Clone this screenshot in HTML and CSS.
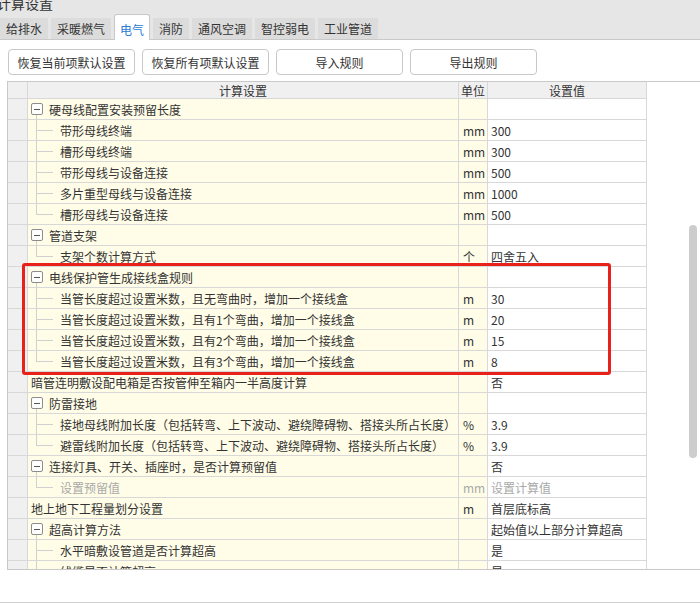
FILE: index.html
```html
<!DOCTYPE html>
<html lang="zh-CN">
<head>
<meta charset="utf-8">
<title>计算设置</title>
<link rel="stylesheet" href="styles.css">
</head>
<body>
<div class="title"><span>计算设置</span></div>
<div class="tabs">
  <div class="tab">给排水</div>
  <div class="tab">采暖燃气</div>
  <div class="tab active">电气</div>
  <div class="tab">消防</div>
  <div class="tab">通风空调</div>
  <div class="tab">智控弱电</div>
  <div class="tab">工业管道</div>
</div>
<div class="toolbar">
  <button class="btn">恢复当前项默认设置</button>
  <button class="btn">恢复所有项默认设置</button>
  <button class="btn">导入规则</button>
  <button class="btn">导出规则</button>
</div>
<div class="grid">
  <div class="row head"><div class="rh"></div><div class="name">计算设置</div><div class="unit">单位</div><div class="val">设置值</div></div>

  <div class="row group"><div class="rh"></div><div class="name"><span class="box"></span><span class="gt">硬母线配置安装预留长度</span></div><div class="unit"></div><div class="val"></div></div>
  <div class="row"><div class="rh"></div><div class="name"><span class="branch"></span>带形母线终端</div><div class="unit">mm</div><div class="val">300</div></div>
  <div class="row"><div class="rh"></div><div class="name"><span class="branch"></span>槽形母线终端</div><div class="unit">mm</div><div class="val">300</div></div>
  <div class="row"><div class="rh"></div><div class="name"><span class="branch"></span>带形母线与设备连接</div><div class="unit">mm</div><div class="val">500</div></div>
  <div class="row"><div class="rh"></div><div class="name"><span class="branch"></span>多片重型母线与设备连接</div><div class="unit">mm</div><div class="val">1000</div></div>
  <div class="row"><div class="rh"></div><div class="name"><span class="branch last"></span>槽形母线与设备连接</div><div class="unit">mm</div><div class="val">500</div></div>

  <div class="row group"><div class="rh"></div><div class="name"><span class="box"></span><span class="gt">管道支架</span></div><div class="unit"></div><div class="val"></div></div>
  <div class="row"><div class="rh"></div><div class="name"><span class="branch last"></span>支架个数计算方式</div><div class="unit">个</div><div class="val">四舍五入</div></div>

  <div class="row group"><div class="rh"></div><div class="name"><span class="box"></span><span class="gt">电线保护管生成接线盒规则</span></div><div class="unit"></div><div class="val"></div></div>
  <div class="row"><div class="rh"></div><div class="name"><span class="branch"></span>当管长度超过设置米数，且无弯曲时，增加一个接线盒</div><div class="unit">m</div><div class="val">30</div></div>
  <div class="row"><div class="rh"></div><div class="name"><span class="branch"></span>当管长度超过设置米数，且有1个弯曲，增加一个接线盒</div><div class="unit">m</div><div class="val">20</div></div>
  <div class="row"><div class="rh"></div><div class="name"><span class="branch"></span>当管长度超过设置米数，且有2个弯曲，增加一个接线盒</div><div class="unit">m</div><div class="val">15</div></div>
  <div class="row"><div class="rh"></div><div class="name"><span class="branch last"></span>当管长度超过设置米数，且有3个弯曲，增加一个接线盒</div><div class="unit">m</div><div class="val">8</div></div>

  <div class="row"><div class="rh"></div><div class="name top">暗管连明敷设配电箱是否按管伸至箱内一半高度计算</div><div class="unit"></div><div class="val">否</div></div>

  <div class="row group"><div class="rh"></div><div class="name"><span class="box"></span><span class="gt">防雷接地</span></div><div class="unit"></div><div class="val"></div></div>
  <div class="row"><div class="rh"></div><div class="name"><span class="branch"></span>接地母线附加长度（包括转弯、上下波动、避绕障碍物、搭接头所占长度）</div><div class="unit">%</div><div class="val">3.9</div></div>
  <div class="row"><div class="rh"></div><div class="name"><span class="branch last"></span>避雷线附加长度（包括转弯、上下波动、避绕障碍物、搭接头所占长度）</div><div class="unit">%</div><div class="val">3.9</div></div>

  <div class="row group"><div class="rh"></div><div class="name"><span class="box"></span><span class="gt">连接灯具、开关、插座时，是否计算预留值</span></div><div class="unit"></div><div class="val">否</div></div>
  <div class="row disabled"><div class="rh"></div><div class="name"><span class="branch last"></span>设置预留值</div><div class="unit">mm</div><div class="val">设置计算值</div></div>

  <div class="row"><div class="rh"></div><div class="name top">地上地下工程量划分设置</div><div class="unit">m</div><div class="val">首层底标高</div></div>

  <div class="row group"><div class="rh"></div><div class="name"><span class="box"></span><span class="gt">超高计算方法</span></div><div class="unit"></div><div class="val">起始值以上部分计算超高</div></div>
  <div class="row"><div class="rh"></div><div class="name"><span class="branch"></span>水平暗敷设管道是否计算超高</div><div class="unit"></div><div class="val">是</div></div>
  <div class="row"><div class="rh"></div><div class="name"><span class="branch"></span>线缆是否计算超高</div><div class="unit"></div><div class="val">是</div></div>

  <div class="highlight"></div>
  <div class="thumb"></div>
</div>
<div class="footer"></div>
</body>
</html>
```
FILE: styles.css
```css
html, body {
  margin: 0;
  padding: 0;
}

body {
  width: 700px;
  height: 603px;
  overflow: hidden;
  background: #ffffff;
  color: #333333;
  font-family: "Noto Sans CJK SC", "Microsoft YaHei", "Liberation Sans", sans-serif;
  font-size: 12px;
}

.title {
  height: 14px;
  background: #e6e6e6;
  overflow: hidden;
  font-size: 14px;
  line-height: 14px;
}

.title span {
  display: block;
  margin-top: -4px;
  margin-left: -3px;
}

.tabs {
  display: flex;
  align-items: flex-end;
  gap: 3px;
  height: 25px;
  background: #e6e6e6;
  border-bottom: 1px solid #c9c9c9;
}

.tab {
  height: 21px;
  line-height: 21px;
  padding: 0 6px;
  background: #dcdcdc;
  white-space: nowrap;
}

.tab.active {
  box-sizing: border-box;
  height: 26px;
  margin-bottom: -1px;
  padding: 4px 5px 0;
  line-height: 21px;
  background: #ffffff;
  border: 1px solid #c9c9c9;
  border-bottom: none;
  border-radius: 3px 3px 0 0;
  color: #2a7ad6;
}

.toolbar {
  display: flex;
  gap: 7px;
  padding: 9px 0 0 8px;
}

.btn {
  box-sizing: border-box;
  width: 127px;
  height: 26px;
  padding: 0;
  margin: 0;
  border: 1px solid #c8c8c8;
  border-radius: 4px;
  background: #ffffff;
  color: #333333;
  font: inherit;
  display: flex;
  align-items: center;
  justify-content: center;
}

.grid {
  position: relative;
  margin: 6px 0 0 7px;
  height: 487px;
  overflow: hidden;
  border-top: 1px solid #c9c9c9;
  border-bottom: 1px solid #c9c9c9;
  border-left: 1px solid #c9c9c9;
  background: #ffffff;
}

.row {
  display: grid;
  grid-template-columns: 20px 431px 29px 159px;
  height: 21px;
}

.row > div {
  box-sizing: border-box;
  display: flex;
  align-items: center;
  white-space: nowrap;
  overflow: hidden;
  border-right: 1px solid #d8d8d8;
  border-bottom: 1px solid #d8d8d8;
}

.rh {
  background: #f0f0f0;
}

.name {
  background: #fffde8;
}

.unit {
  background: #fffde8;
  padding-left: 4px;
}

.val {
  background: #ffffff;
  padding-left: 3px;
}

.row.head {
  height: 17px;
}

.row.head > div {
  background: #f0f0f0;
  justify-content: center;
  padding: 0;
}

.name.top {
  padding-left: 3px;
}

.row.group .name {
  background: linear-gradient(#d0d0d0, #d0d0d0) 8px 16px / 1px 5px no-repeat, #fffde8;
}

.box {
  box-sizing: border-box;
  width: 12px;
  height: 12px;
  margin-left: 3px;
  border: 1px solid #8c8c8c;
  border-radius: 2px;
  background: #ffffff;
  display: flex;
  align-items: center;
  justify-content: center;
  flex: none;
}

.box::before {
  content: "";
  width: 6px;
  height: 1px;
  background: #555555;
}

.gt {
  margin-left: 6px;
}

.branch {
  flex: none;
  align-self: stretch;
  width: 24px;
  margin-left: 8px;
  background:
    linear-gradient(#d0d0d0, #d0d0d0) 0 0 / 1px 100% no-repeat,
    linear-gradient(#d0d0d0, #d0d0d0) 0 10px / 17px 1px no-repeat;
}

.branch.last {
  background:
    linear-gradient(#d0d0d0, #d0d0d0) 0 0 / 1px 11px no-repeat,
    linear-gradient(#d0d0d0, #d0d0d0) 0 10px / 17px 1px no-repeat;
}

.row.disabled .name,
.row.disabled .unit,
.row.disabled .val {
  color: #a9a9a9;
}

.highlight {
  position: absolute;
  left: 14px;
  top: 181px;
  width: 589px;
  height: 112px;
  box-sizing: border-box;
  border: 3px solid #e8211b;
  border-radius: 3px;
  pointer-events: none;
}

.thumb {
  position: absolute;
  right: 3px;
  top: 143px;
  width: 8px;
  height: 233px;
  border-radius: 4px;
  background: #cdcdcd;
}

.footer {
  margin-top: 32px;
  border-top: 1px solid #cfcfcf;
  height: 1px;
}
```
